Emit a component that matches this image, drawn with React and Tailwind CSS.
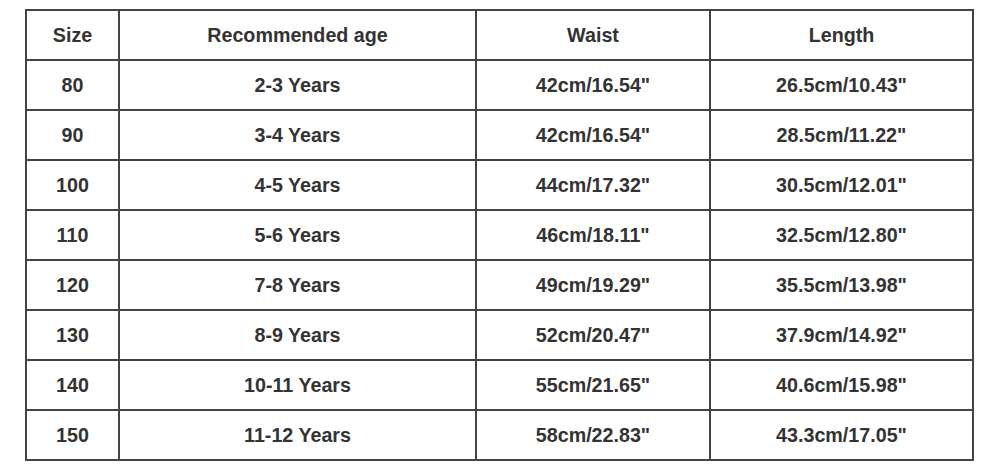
const headers = ["Size", "Recommended age", "Waist", "Length"];

const rows = [
	["80", "2-3 Years", "42cm/16.54\"", "26.5cm/10.43\""],
	["90", "3-4 Years", "42cm/16.54\"", "28.5cm/11.22\""],
	["100", "4-5 Years", "44cm/17.32\"", "30.5cm/12.01\""],
	["110", "5-6 Years", "46cm/18.11\"", "32.5cm/12.80\""],
	["120", "7-8 Years", "49cm/19.29\"", "35.5cm/13.98\""],
	["130", "8-9 Years", "52cm/20.47\"", "37.9cm/14.92\""],
	["140", "10-11 Years", "55cm/21.65\"", "40.6cm/15.98\""],
	["150", "11-12 Years", "58cm/22.83\"", "43.3cm/17.05\""],
];

const widths = ["w-[93px]", "w-[357px]", "w-[234px]", "w-[263px]"];

const App = () => {
	return (
		<div className="w-[1000px] h-[471px] bg-white pt-[9px] pl-[25px] font-['Liberation_Sans',Arial,sans-serif]">
			<table className="border-collapse border-2 border-[#444] text-[19.7px] font-bold text-[#333] table-fixed">
				<thead>
					<tr className="h-[50px]">
						{headers.map((h, i) => (
							<th key={i} className={`${widths[i]} border-2 border-[#444] text-center font-bold p-0 pt-[2px]`}>{h}</th>
						))}
					</tr>
				</thead>
				<tbody>
					{rows.map((r, i) => (
						<tr key={i} className="h-[50px]">
							{r.map((c, j) => (
								<td key={j} className={`${widths[j]} border-2 border-[#444] text-center p-0 pt-[2px]`}>{c}</td>
							))}
						</tr>
					))}
				</tbody>
			</table>
		</div>
	);
};

export default App;
